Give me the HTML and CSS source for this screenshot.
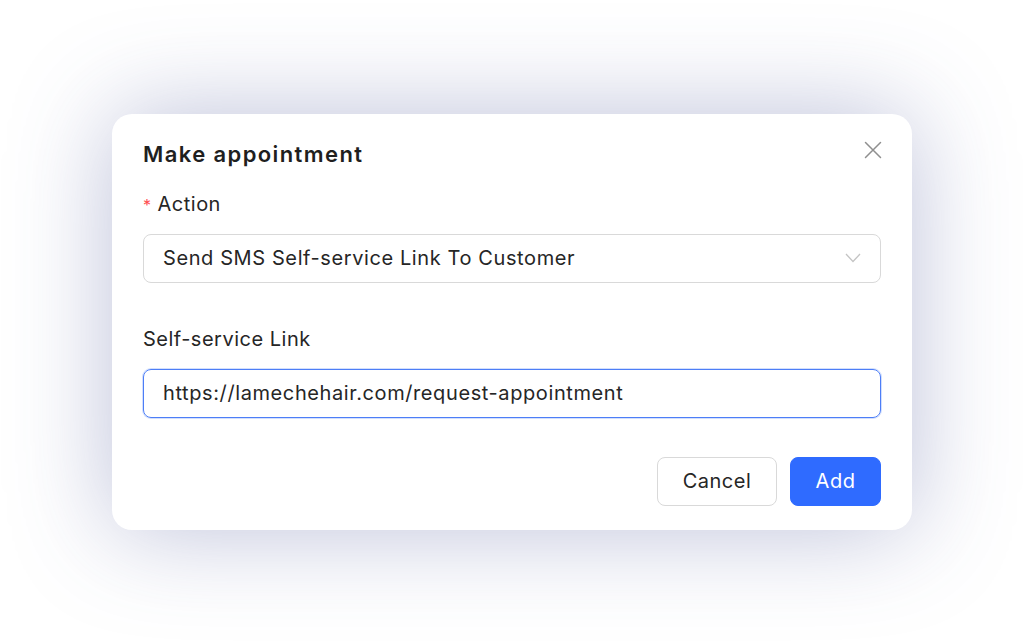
FILE: index.html
```html
<!DOCTYPE html>
<html lang="en">
<head>
    <meta charset="UTF-8">
    <meta name="viewport" content="width=device-width, initial-scale=1.0">
    <title>Make appointment</title>
    <link rel="stylesheet" href="styles.css">
</head>
<body>
    <div class="dialog">
        <button class="close" aria-label="Close">
            <svg width="18" height="18" viewBox="0 0 18 18">
                <path d="M1.5 1.5L16.5 16.5M16.5 1.5L1.5 16.5" stroke="#8f8f8f" stroke-width="1.5" fill="none" stroke-linecap="round"/>
            </svg>
        </button>
        <h1 class="title">Make appointment</h1>

        <label class="label"><span class="required">*</span>Action</label>
        <div class="field select">
            <span>Send SMS Self-service Link To Customer</span>
            <svg width="16" height="10" viewBox="0 0 16 10">
                <path d="M1 1L8 8.5L15 1" stroke="#c4c4c4" stroke-width="1.3" fill="none"/>
            </svg>
        </div>

        <label class="label label-spaced">Self-service Link</label>
        <div class="field input">
            <span>https://lamechehair.com/request-appointment</span>
        </div>

        <div class="footer">
            <button class="btn btn-cancel">Cancel</button>
            <button class="btn btn-add">Add</button>
        </div>
    </div>
</body>
</html>
```

FILE: styles.css
```css
body {
    font-family: Inter, "Noto Sans", sans-serif;
    display: flex;
    justify-content: center;
    align-items: center;
    height: 100vh;
    margin: 0;
    background-color: #ffffff;
    color: #262626;
}

.dialog {
    position: relative;
    width: 800px;
    box-sizing: border-box;
    padding: 26px 31px 24px 31px;
    background-color: #ffffff;
    border-radius: 20px;
    box-shadow: 0 0 100px rgba(70, 80, 150, 0.36);
}

.close {
    position: absolute;
    top: 27px;
    right: 30px;
    width: 18px;
    height: 18px;
    padding: 0;
    border: none;
    background: none;
}

.title {
    margin: 0;
    font-size: 22px;
    line-height: 28px;
    font-weight: 600;
    letter-spacing: 1.4px;
    color: #1f1f1f;
}

.label {
    display: block;
    margin-top: 23px;
    font-size: 20px;
    line-height: 26px;
    letter-spacing: 0.5px;
    color: #262626;
}

.label-spaced {
    margin-top: 43px;
}

.required {
    color: #ff4d4f;
    margin-right: 6px;
    font-size: 16px;
    line-height: 0;
}

.field {
    display: flex;
    align-items: center;
    justify-content: space-between;
    height: 49px;
    box-sizing: border-box;
    margin-top: 17px;
    padding: 0 19px;
    font-size: 20px;
    letter-spacing: 0.6px;
    border: 1px solid #d9d9d9;
    border-radius: 8px;
    color: #262626;
}

.input {
    border-color: #4d7ef7;
    box-shadow: 0 0 0 1px rgba(77, 126, 247, 0.25);
}

.footer {
    display: flex;
    justify-content: flex-end;
    gap: 13px;
    margin-top: 39px;
}

.btn {
    height: 49px;
    padding: 0;
    font-family: inherit;
    font-size: 20px;
    letter-spacing: 0.5px;
    border-radius: 8px;
    cursor: pointer;
}

.btn-cancel {
    width: 120px;
    background-color: #ffffff;
    border: 1px solid #d9d9d9;
    color: #262626;
}

.btn-add {
    width: 91px;
    background-color: #2f6bff;
    border: 1px solid #2f6bff;
    color: #ffffff;
}
```
